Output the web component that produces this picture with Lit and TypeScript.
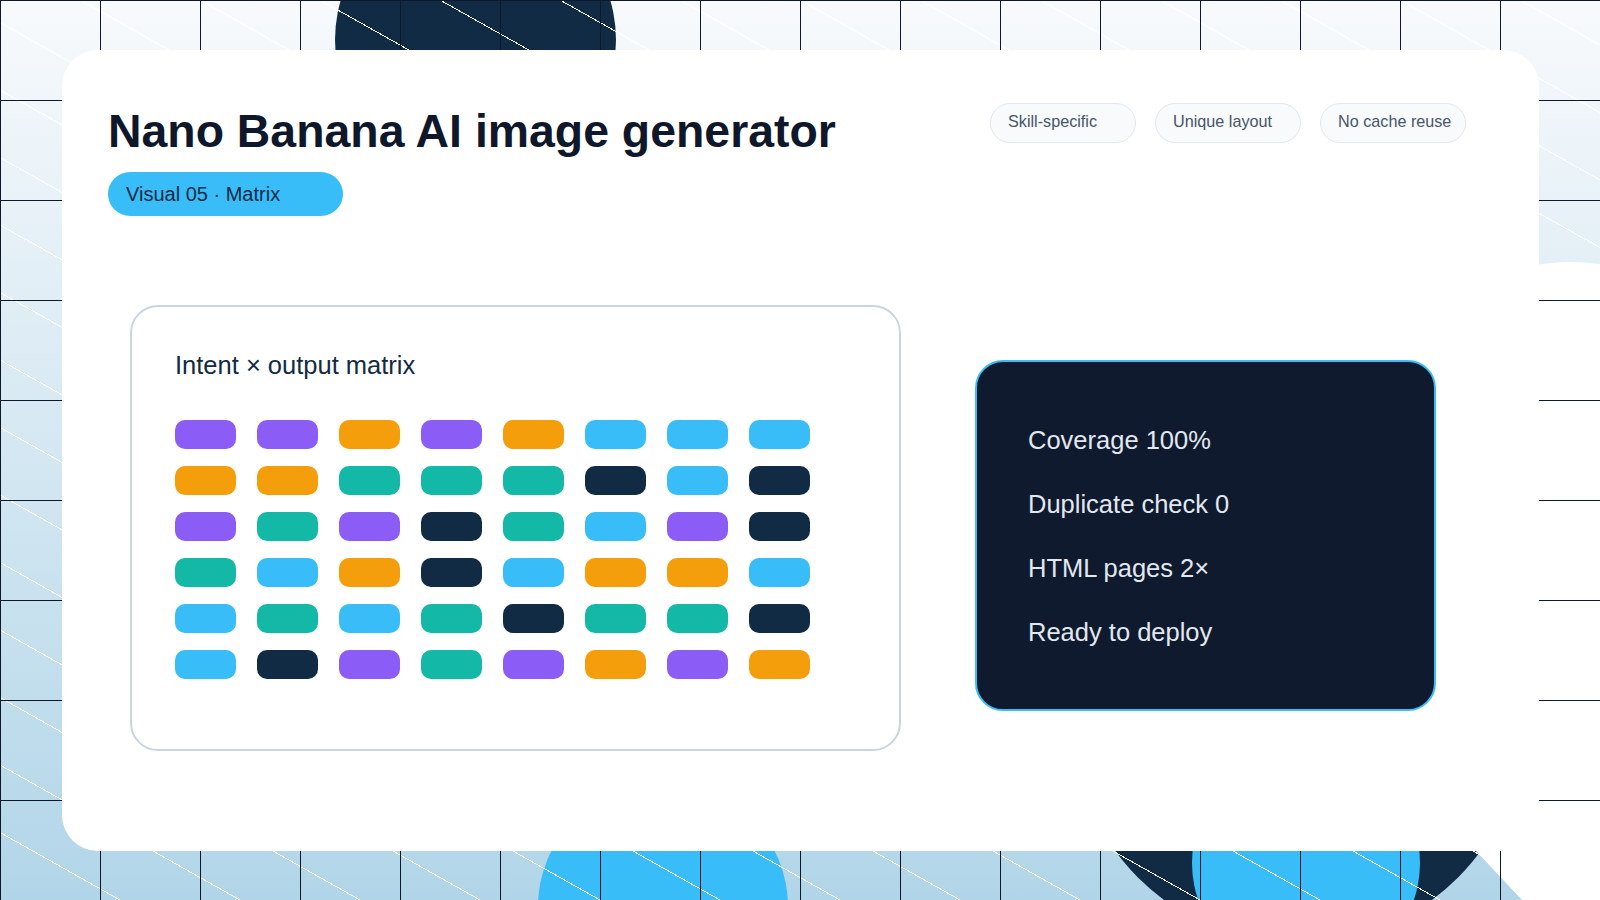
import { LitElement, html, css, svg } from "lit";
import { customElement } from "lit/decorators.js";

const P = "#8b5cf6", O = "#f59e0b", T = "#14b8a6", B = "#38bdf8", N = "#122b45";
const ROWS = [
  [P, P, O, P, O, B, B, B],
  [O, O, T, T, T, N, B, N],
  [P, T, P, N, T, B, P, N],
  [T, B, O, N, B, O, O, B],
  [B, T, B, T, N, T, T, N],
  [B, N, P, T, P, O, P, O],
];
const TAGS = ["Skill-specific", "Unique layout", "No cache reuse"];
const STATS = ["Coverage 100%", "Duplicate check 0", "HTML pages 2×", "Ready to deploy"];

const grid: number[] = [];
for (let i = 0; i <= 16; i++) grid.push(i * 100);
const diag: number[] = [];
for (let i = -14; i <= 14; i++) diag.push(80 + i * 120);

@customElement("app-root")
export class AppRoot extends LitElement {
  static styles = css`
    :host {
      display: block;
      width: 1600px;
      height: 900px;
      position: relative;
      overflow: hidden;
      font-family: "Liberation Sans", Arial, sans-serif;
    }
    .backdrop {
      position: absolute;
      inset: 0;
      width: 1600px;
      height: 900px;
    }
    .stage {
      position: relative;
      box-sizing: border-box;
      height: 900px;
      padding: 50px 61px 49px 62px;
    }
    .card {
      box-sizing: border-box;
      height: 801px;
      background: #fff;
      border-radius: 36px;
      display: flex;
      flex-direction: column;
      padding: 53px 46px 0 46px;
    }
    .head {
      display: flex;
      justify-content: space-between;
      align-items: flex-start;
      height: 202px;
    }
    h1 {
      margin: 0;
      padding-top: 2px;
      font-size: 46.4px;
      line-height: 53px;
      font-weight: 700;
      color: #0f172a;
    }
    .pill {
      box-sizing: border-box;
      width: 235px;
      height: 44px;
      margin-top: 14px;
      padding: 0 18px;
      border-radius: 22px;
      background: #38bdf8;
      color: #122b45;
      font-size: 20px;
      line-height: 45px;
    }
    .tags {
      display: flex;
      gap: 19px;
      margin-right: 27px;
    }
    .tag {
      box-sizing: border-box;
      width: 146px;
      height: 40px;
      padding: 7px 17px 0;
      border: 1px solid #e2e8f0;
      border-radius: 20px;
      background: #f8fafc;
      color: #475569;
      font-size: 16.2px;
      line-height: 20px;
      white-space: nowrap;
    }
    .body {
      display: flex;
      align-items: flex-start;
      padding-left: 22px;
      gap: 74px;
    }
    .matrix {
      box-sizing: border-box;
      width: 771px;
      height: 446px;
      padding: 43px 43px 0;
      border: 2px solid #cbd5e1;
      border-radius: 28px;
    }
    h2 {
      margin: 0 0 40px;
      font-size: 25.5px;
      line-height: 30px;
      font-weight: 400;
      color: #122b45;
    }
    .cells {
      display: grid;
      grid-template-columns: repeat(8, 61px);
      grid-auto-rows: 29px;
      column-gap: 21px;
      row-gap: 17px;
    }
    .cell {
      border-radius: 10px;
    }
    .stats {
      box-sizing: border-box;
      width: 461px;
      height: 351px;
      margin-top: 55px;
      padding: 63px 51px 0;
      display: flex;
      flex-direction: column;
      gap: 34px;
      background: #0f1a2e;
      border: 2px solid #38bdf8;
      border-radius: 28px;
      color: #e2e8f0;
      font-size: 25.5px;
      line-height: 30px;
    }
    .crisp {
      shape-rendering: crispEdges;
    }
  `;

  render() {
    return html`
      <svg class="backdrop" viewBox="0 0 1600 900" aria-hidden="true">
        <defs>
          <linearGradient id="bg" x1="0" y1="0" x2="0" y2="1">
            <stop offset="0" stop-color="#f8fafc"></stop>
            <stop offset="1" stop-color="#b1d5e8"></stop>
          </linearGradient>
        </defs>
        <rect width="1600" height="900" fill="url(#bg)"></rect>
        <circle cx="475.5" cy="40" r="140.5" fill="#122b45"></circle>
        <circle cx="1298" cy="718" r="226" fill="#122b45"></circle>
        <circle cx="663" cy="907" r="125" fill="#38bdf8"></circle>
        <circle cx="1306" cy="863" r="114" fill="#38bdf8"></circle>
        <circle cx="1570" cy="462" r="200" fill="#fff"></circle>
        <polygon points="1478,462 1600,462 1600,900 1522,900 1475,850 1478,850" fill="#fff"></polygon>
        ${diag.map(
          (x) => svg`<line class="crisp" x1=${x} y1="0" x2=${x + 3200} y2="1800" stroke="#fff" stroke-width="1"></line>`
        )}
        ${grid.map(
          (x) => svg`<rect x=${x} y="0" width="1" height="900" fill="#0f172a"></rect>`
        )}
        ${grid.slice(0, 9).map(
          (y) => svg`<rect x="0" y=${y} width="1600" height="1" fill="#0f172a"></rect>`
        )}
      </svg>
      <div class="stage">
        <main class="card">
          <header class="head">
            <div>
              <h1>Nano Banana AI image generator</h1>
              <div class="pill">Visual 05 · Matrix</div>
            </div>
            <div class="tags">
              ${TAGS.map((t) => html`<div class="tag">${t}</div>`)}
            </div>
          </header>
          <section class="body">
            <div class="matrix">
              <h2>Intent × output matrix</h2>
              <div class="cells">
                ${ROWS.flat().map(
                  (c) => html`<div class="cell" style="background:${c}"></div>`
                )}
              </div>
            </div>
            <aside class="stats">
              ${STATS.map((s) => html`<div>${s}</div>`)}
            </aside>
          </section>
        </main>
      </div>
    `;
  }
}
